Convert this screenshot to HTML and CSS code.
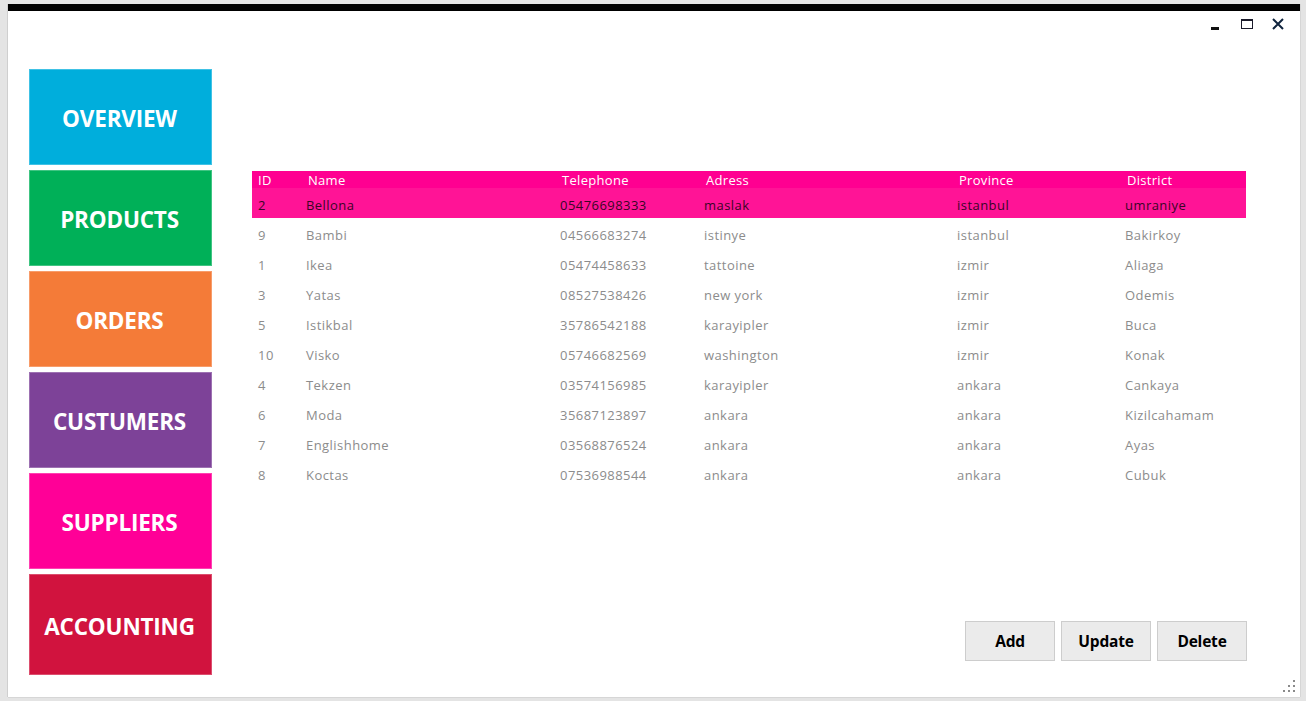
FILE: index.html
```html
<!DOCTYPE html>
<html>
<head>
<meta charset="utf-8">
<link rel="stylesheet" href="styles.css">
</head>
<body>
<div class="window">
  <div class="topbar"></div>
  <div class="titlerow">
    <div class="controls">
      <svg class="ctl" width="14" height="14" viewBox="0 0 14 14"><rect x="2" y="10" width="8" height="3" fill="#111"/></svg>
      <svg class="ctl" width="14" height="14" viewBox="0 0 14 14"><rect x="1.5" y="2.5" width="11" height="9" fill="none" stroke="#1a1a2a" stroke-width="1"/><rect x="1" y="2" width="12" height="2" fill="#1a1a2a"/></svg>
      <svg class="ctl" width="14" height="14" viewBox="0 0 14 14"><path d="M2 2 L12 12 M12 2 L2 12" stroke="#10243e" stroke-width="2"/></svg>
    </div>
  </div>
  <div class="content">
    <nav class="sidebar">
      <div class="tile overview">OVERVIEW</div>
      <div class="tile products">PRODUCTS</div>
      <div class="tile orders">ORDERS</div>
      <div class="tile custumers">CUSTUMERS</div>
      <div class="tile suppliers">SUPPLIERS</div>
      <div class="tile accounting">ACCOUNTING</div>
    </nav>
    <main class="main">
      <div class="grid">
        <div class="row head"><span>ID</span><span>Name</span><span>Telephone</span><span>Adress</span><span>Province</span><span>District</span></div>
        <div class="row sel"><span>2</span><span>Bellona</span><span>05476698333</span><span>maslak</span><span>istanbul</span><span>umraniye</span></div>
        <div class="row"><span>9</span><span>Bambi</span><span>04566683274</span><span>istinye</span><span>istanbul</span><span>Bakirkoy</span></div>
        <div class="row"><span>1</span><span>Ikea</span><span>05474458633</span><span>tattoine</span><span>izmir</span><span>Aliaga</span></div>
        <div class="row"><span>3</span><span>Yatas</span><span>08527538426</span><span>new york</span><span>izmir</span><span>Odemis</span></div>
        <div class="row"><span>5</span><span>Istikbal</span><span>35786542188</span><span>karayipler</span><span>izmir</span><span>Buca</span></div>
        <div class="row"><span>10</span><span>Visko</span><span>05746682569</span><span>washington</span><span>izmir</span><span>Konak</span></div>
        <div class="row"><span>4</span><span>Tekzen</span><span>03574156985</span><span>karayipler</span><span>ankara</span><span>Cankaya</span></div>
        <div class="row"><span>6</span><span>Moda</span><span>35687123897</span><span>ankara</span><span>ankara</span><span>Kizilcahamam</span></div>
        <div class="row"><span>7</span><span>Englishhome</span><span>03568876524</span><span>ankara</span><span>ankara</span><span>Ayas</span></div>
        <div class="row"><span>8</span><span>Koctas</span><span>07536988544</span><span>ankara</span><span>ankara</span><span>Cubuk</span></div>
      </div>
      <div class="buttons">
        <button class="btn">Add</button>
        <button class="btn">Update</button>
        <button class="btn">Delete</button>
      </div>
    </main>
  </div>
  <svg class="grip" width="14" height="14" viewBox="0 0 14 14">
    <rect x="11" y="1" width="2" height="2" fill="#8a8a8a"/>
    <rect x="6" y="6" width="2" height="2" fill="#8a8a8a"/>
    <rect x="11" y="6" width="2" height="2" fill="#8a8a8a"/>
    <rect x="1" y="11" width="2" height="2" fill="#8a8a8a"/>
    <rect x="6" y="11" width="2" height="2" fill="#8a8a8a"/>
    <rect x="11" y="11" width="2" height="2" fill="#8a8a8a"/>
  </svg>
</div>
</body>
</html>
```
FILE: styles.css
```css
html, body {
  margin: 0;
  padding: 0;
}
body {
  background: #e4e4e4;
  width: 1306px;
  height: 701px;
  overflow: hidden;
  font-family: "Open Sans", "Noto Sans", sans-serif;
}
.window {
  position: relative;
  margin: 4px 0 0 8px;
  width: 1292px;
  height: 693px;
  background: #fff;
  box-shadow: -1px 0 0 #cfcfcf, 1px 0 0 #d6d6d6, 0 1px 0 #d6d6d6;
}
.topbar {
  height: 7px;
  background: #000;
}
.titlerow {
  height: 58px;
  display: flex;
  justify-content: flex-end;
  align-items: flex-start;
}
.controls {
  display: flex;
  gap: 17px;
  margin-top: 6px;
  margin-right: 15px;
}
.ctl {
  display: block;
}
.content {
  display: flex;
}
.sidebar {
  display: flex;
  flex-direction: column;
  gap: 5px;
  margin-left: 21px;
  width: 183px;
}
.tile {
  height: 96px;
  box-sizing: border-box;
  display: flex;
  align-items: center;
  justify-content: center;
  padding-right: 2px;
  padding-top: 3px;
  color: #fff;
  font-weight: 700;
  font-size: 22.5px;
  letter-spacing: -0.2px;
  border: 1px solid rgba(255,255,255,0.25);
}
.tile.accounting { height: 101px; padding-top: 4px; }
.overview { background: #00aedc; }
.products { background: #00b058; }
.orders { background: #f47b38; }
.custumers { background: #7d4298; }
.suppliers { background: #ff0097; }
.accounting { background: #d1133e; }

.main {
  margin-left: 40px;
  padding-top: 102px;
  width: 995px;
  display: flex;
  flex-direction: column;
}
.grid {
  width: 994px;
}
.row {
  display: grid;
  grid-template-columns: 54px 254px 144px 253px 168px 121px;
  height: 30px;
  align-items: center;
  font-size: 13px;
  letter-spacing: 0.45px;
  color: #8c8c8c;
  padding-top: 4px;
  box-sizing: border-box;
}
.row span:first-child {
  padding-left: 6px;
}
.row.head {
  height: 17px;
  padding-top: 0;
  letter-spacing: 0.3px;
  background: #ff0091;
  color: #fff;
}
.row.head span {
  padding-left: 2px;
}
.row.head span:first-child {
  padding-left: 6px;
}
.row.sel {
  background: #ff1496;
  color: #3a0526;
}
.buttons {
  display: flex;
  justify-content: flex-end;
  gap: 6px;
  margin-top: 133px;
}
.btn {
  width: 90px;
  height: 40px;
  background: #ebebeb;
  border: 1px solid #cdcdcd;
  font-family: "Open Sans", "Noto Sans", sans-serif;
  font-weight: 700;
  font-size: 15.5px;
  color: #000;
  padding: 0;
  letter-spacing: -0.2px;
}
.grip {
  position: absolute;
  right: 4px;
  bottom: 4px;
}
```
